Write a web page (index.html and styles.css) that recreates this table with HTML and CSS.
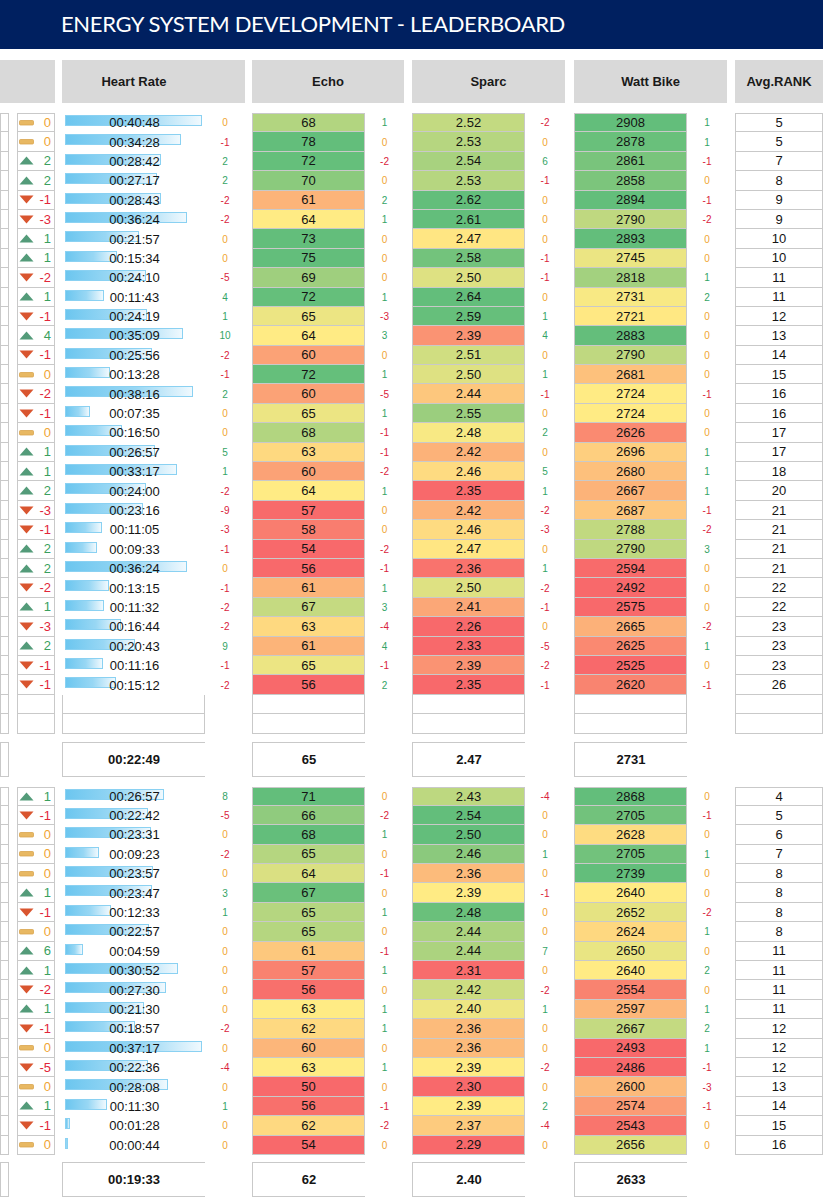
FILE: index.html
```html
<!DOCTYPE html>
<html lang="en">
<head>
<meta charset="utf-8">
<title>Energy System Development - Leaderboard</title>
<link rel="stylesheet" href="styles.css">
</head>
<body>
<div class="sheet">
  <div class="title">ENERGY SYSTEM DEVELOPMENT - LEADERBOARD</div>
  <div class="grid head">
    <div class="h h-left"></div>
    <div class="h h-hr">Heart Rate</div>
    <div class="h h-echo">Echo</div>
    <div class="h h-sparc">Sparc</div>
    <div class="h h-watt">Watt Bike</div>
    <div class="h h-rank">Avg.RANK</div>
  </div>
  <div class="section" id="sec1"></div>
  <div class="grid avg avg1">
    <div class="c cA abf"></div>
    <div class="c cHR ab">00:22:49</div>
    <div class="c cE ab">65</div>
    <div class="c cS ab">2.47</div>
    <div class="c cW ab">2731</div>
  </div>
  <div class="section sec2" id="sec2"></div>
  <div class="grid avg avg2">
    <div class="c cA abf"></div>
    <div class="c cHR ab">00:19:33</div>
    <div class="c cE ab">62</div>
    <div class="c cS ab">2.40</div>
    <div class="c cW ab">2633</div>
  </div>
</div>
<script src="script.js"></script>
</body>
</html>
```

FILE: styles.css
```css
* { box-sizing: border-box; }
body {
  margin: 0;
  background: #ffffff;
  font-family: "Liberation Sans", Arial, sans-serif;
  color: #141414;
}
.sheet { width: 840px; }
.title {
  width: 823px;
  height: 49px;
  background: #002060;
  color: #ffffff;
  font-family: Lato, "Open Sans", sans-serif;
  font-size: 22px;
  letter-spacing: -0.35px;
  padding-left: 61px;
  padding-bottom: 3px;
  display: flex;
  align-items: center;
}
.grid {
  display: grid;
  grid-template-columns: 9px 8px 38px 7px 143px 40px 7px 113px 39px 8px 113px 40px 9px 113px 40px 8px 88px;
}
.head { margin-top: 11px; height: 43px; }
.h {
  background: #d9d9d9;
  display: flex;
  align-items: center;
  justify-content: center;
  font-weight: bold;
  font-size: 13px;
  color: #1a1a1a;
}
.h-left { grid-column: 1 / 4; }
.h-hr { grid-column: 5 / 7; padding-right: 39px; }
.h-echo { grid-column: 8 / 10; }
.h-sparc { grid-column: 11 / 13; }
.h-watt { grid-column: 14 / 16; }
.h-rank { grid-column: 17; }

.section { margin-top: 10px; }
.row { height: 19.4px; font-size: 13px; }
.c {
  display: flex;
  align-items: center;
  justify-content: center;
  min-width: 0;
}
.cA { grid-column: 1; }
.cRC { grid-column: 3; justify-content: space-between; padding: 0 3px 0 1px; }
.cHR { grid-column: 5; position: relative; }
.cHRd { grid-column: 6; }
.cE { grid-column: 8; }
.cEd { grid-column: 9; }
.cS { grid-column: 11; }
.cSd { grid-column: 12; }
.cW { grid-column: 14; }
.cWd { grid-column: 15; }
.cR { grid-column: 17; }

.bd { border: 1px solid #c9c9c9; border-top: 0; }
.section .row:first-child .bd { border-top: 1px solid #c9c9c9; }

.bar {
  position: absolute;
  left: 3px;
  top: 2px;
  height: 11px;
  border: 1px solid #8ad1f2;
  background: linear-gradient(to right, #6cc6ef 0%, #98d7f4 55%, #f0f9fe 100%);
}
.t { position: relative; padding-left: 2px; }

.d { font-size: 10px; }
.g { color: #34a466; }
.r { color: #d9233c; }
.o { color: #f0a534; }
.num { font-size: 13px; }
.num.g { color: #3a9f5e; }
.num.r { color: #e1263a; }
.num.o { color: #f0a534; }
.ic { display: block; }

.avg { height: 35px; font-weight: bold; font-size: 13px; margin-top: 8px; }
.ab { border: 1px solid #c9c9c9; border-right: 0; }
.abf { border: 1px solid #c9c9c9; }
.avg2 { margin-top: 7px; }
```

FILE: script.js
```js
var S1 = [
"0|00:40:48|0|68|1|2.52|-2|2908|1|5",
"0|00:34:28|-1|78|0|2.53|0|2878|1|5",
"2|00:28:42|2|72|-2|2.54|6|2861|-1|7",
"2|00:27:17|2|70|0|2.53|-1|2858|0|8",
"-1|00:28:43|-2|61|2|2.62|0|2894|-1|9",
"-3|00:36:24|-2|64|1|2.61|0|2790|-2|9",
"1|00:21:57|0|73|0|2.47|0|2893|0|10",
"1|00:15:34|0|75|0|2.58|-1|2745|0|10",
"-2|00:24:10|-5|69|0|2.50|-1|2818|1|11",
"1|00:11:43|4|72|1|2.64|0|2731|2|11",
"-1|00:24:19|1|65|-3|2.59|1|2721|0|12",
"4|00:35:09|10|64|3|2.39|4|2883|0|13",
"-1|00:25:56|-2|60|0|2.51|0|2790|0|14",
"0|00:13:28|-1|72|1|2.50|1|2681|0|15",
"-2|00:38:16|2|60|-5|2.44|-1|2724|-1|16",
"-1|00:07:35|0|65|1|2.55|0|2724|0|16",
"0|00:16:50|0|68|-1|2.48|2|2626|0|17",
"1|00:26:57|5|63|-1|2.42|0|2696|1|17",
"1|00:33:17|1|60|-2|2.46|5|2680|1|18",
"2|00:24:00|-2|64|1|2.35|1|2667|1|20",
"-3|00:23:16|-9|57|0|2.42|-2|2687|-1|21",
"-1|00:11:05|-3|58|0|2.46|-3|2788|-2|21",
"2|00:09:33|-1|54|-2|2.47|0|2790|3|21",
"2|00:36:24|0|56|-1|2.36|1|2594|0|21",
"-2|00:13:15|-1|61|1|2.50|-2|2492|0|22",
"1|00:11:32|-2|67|3|2.41|-1|2575|0|22",
"-3|00:16:44|-2|63|-4|2.26|0|2665|-2|23",
"2|00:20:43|9|61|4|2.33|-5|2625|1|23",
"-1|00:11:16|-1|65|-1|2.39|-2|2525|0|23",
"-1|00:15:12|-2|56|2|2.35|-1|2620|-1|26"
];
var S2 = [
"1|00:26:57|8|71|0|2.43|-4|2868|0|4",
"-1|00:22:42|-5|66|-2|2.54|0|2705|-1|5",
"0|00:23:31|0|68|1|2.50|0|2628|0|6",
"0|00:09:23|-2|65|0|2.46|1|2705|1|7",
"0|00:23:57|0|64|-1|2.36|0|2739|0|8",
"1|00:23:47|3|67|0|2.39|-1|2640|0|8",
"-1|00:12:33|1|65|1|2.48|0|2652|-2|8",
"0|00:22:57|0|65|0|2.44|0|2624|1|8",
"6|00:04:59|0|61|-1|2.44|7|2650|0|11",
"1|00:30:52|0|57|1|2.31|0|2640|2|11",
"-2|00:27:30|0|56|0|2.42|-2|2554|0|11",
"1|00:21:30|0|63|1|2.40|1|2597|1|11",
"-1|00:18:57|-2|62|1|2.36|0|2667|2|12",
"0|00:37:17|0|60|0|2.36|0|2493|1|12",
"-5|00:22:36|-4|63|1|2.39|-2|2486|-1|12",
"0|00:28:08|0|50|0|2.30|0|2600|-3|13",
"1|00:11:30|1|56|-1|2.39|2|2574|-1|14",
"-1|00:01:28|0|62|-2|2.37|-4|2543|0|15",
"0|00:00:44|0|54|0|2.29|0|2656|0|16"
];

function pct(sorted, p) {
  var pos = (sorted.length - 1) * p;
  var lo = Math.floor(pos), hi = Math.ceil(pos);
  return sorted[lo] + (sorted[hi] - sorted[lo]) * (pos - lo);
}
var RED = [248, 105, 107], YEL = [255, 235, 132], GRN = [99, 190, 123];
function mix(a, b, t) {
  return "rgb(" + Math.round(a[0] + (b[0] - a[0]) * t) + "," + Math.round(a[1] + (b[1] - a[1]) * t) + "," + Math.round(a[2] + (b[2] - a[2]) * t) + ")";
}
function scale(values) {
  var s = values.slice().sort(function (a, b) { return a - b; });
  var lo = pct(s, 0.1), mid = pct(s, 0.5), hi = pct(s, 0.9);
  return function (v) {
    if (v <= lo) return mix(RED, RED, 0);
    if (v >= hi) return mix(GRN, GRN, 0);
    if (v <= mid) return mix(RED, YEL, (v - lo) / (mid - lo));
    return mix(YEL, GRN, (v - mid) / (hi - mid));
  };
}
function secs(t) {
  var p = t.split(":");
  return (+p[0]) * 3600 + (+p[1]) * 60 + (+p[2]);
}
function cls(v) { return v > 0 ? "g" : (v < 0 ? "r" : "o"); }
function icon(v) {
  if (v > 0) return '<svg class="ic" width="15" height="9" viewBox="0 0 15 9"><polygon points="7.5,0.5 14.5,8.5 0.5,8.5" fill="#539b79"/></svg>';
  if (v < 0) return '<svg class="ic" width="15" height="9" viewBox="0 0 15 9"><polygon points="0.5,0.5 14.5,0.5 7.5,8.5" fill="#d9552f"/></svg>';
  return '<svg class="ic" width="15" height="9" viewBox="0 0 15 9"><rect x="0.5" y="2.5" width="14" height="4.5" rx="1" fill="#e8b862" stroke="#d9a54e" stroke-width="0.8"/></svg>';
}
function build(id, lines, blanks) {
  var rows = lines.map(function (l) { return l.split("|"); });
  var maxS = Math.max.apply(null, rows.map(function (r) { return secs(r[1]); }));
  var ce = scale(rows.map(function (r) { return +r[3]; }));
  var cs = scale(rows.map(function (r) { return +r[5]; }));
  var cw = scale(rows.map(function (r) { return +r[7]; }));
  var html = "";
  rows.forEach(function (r) {
    var rc = +r[0];
    var w = Math.max(2, Math.round(secs(r[1]) / maxS * 137));
    html += '<div class="grid row">' +
      '<div class="c cA bd"></div>' +
      '<div class="c cRC bd">' + icon(rc) + '<span class="num ' + cls(rc) + '">' + r[0] + '</span></div>' +
      '<div class="c cHR"><span class="bar" style="width:' + w + 'px"></span><span class="t">' + r[1] + '</span></div>' +
      '<div class="c cHRd d ' + cls(+r[2]) + '">' + r[2] + '</div>' +
      '<div class="c cE bd" style="background:' + ce(+r[3]) + '">' + r[3] + '</div>' +
      '<div class="c cEd d ' + cls(+r[4]) + '">' + r[4] + '</div>' +
      '<div class="c cS bd" style="background:' + cs(+r[5]) + '">' + r[5] + '</div>' +
      '<div class="c cSd d ' + cls(+r[6]) + '">' + r[6] + '</div>' +
      '<div class="c cW bd" style="background:' + cw(+r[7]) + '">' + r[7] + '</div>' +
      '<div class="c cWd d ' + cls(+r[8]) + '">' + r[8] + '</div>' +
      '<div class="c cR bd">' + r[9] + '</div>' +
      '</div>';
  });
  for (var i = 0; i < blanks; i++) {
    html += '<div class="grid row">' +
      '<div class="c cA bd"></div><div class="c cRC bd"></div><div class="c cHR bd"></div>' +
      '<div class="c cE bd"></div><div class="c cS bd"></div><div class="c cW bd"></div><div class="c cR bd"></div>' +
      '</div>';
  }
  document.getElementById(id).innerHTML = html;
}
build("sec1", S1, 2);
build("sec2", S2, 0);
```
